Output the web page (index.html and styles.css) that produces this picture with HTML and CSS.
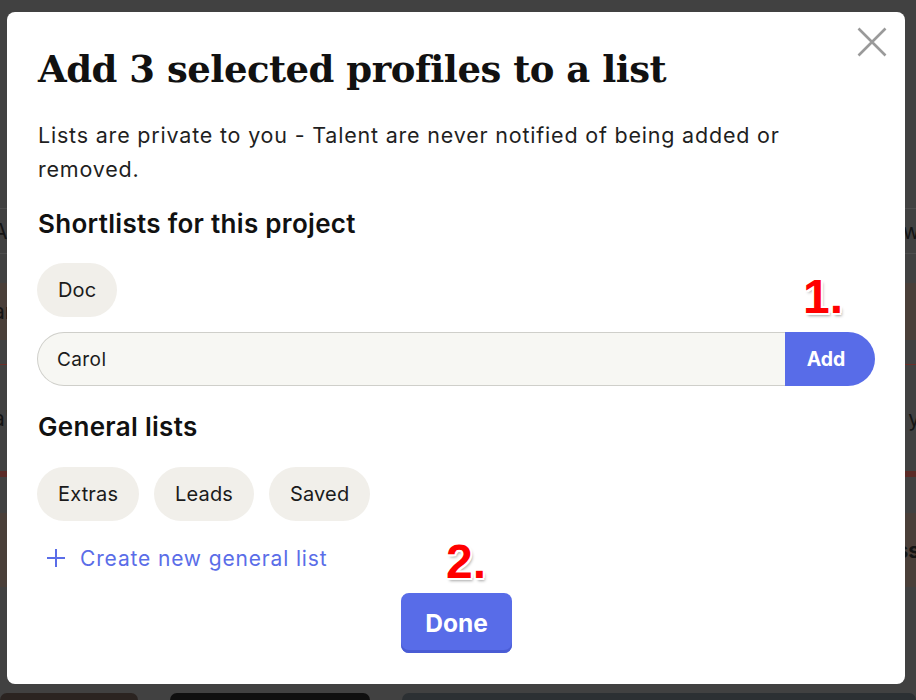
FILE: index.html
```html
<!DOCTYPE html>
<html lang="en">
<head>
<meta charset="utf-8">
<title>Add to list</title>
<link rel="stylesheet" href="styles.css">
</head>
<body>
<div class="page" aria-hidden="true">
  <div class="bg-space bg-top"></div>
  <div class="bg-line"></div>
  <div class="bg-row bg-row-a"><span class="bg-left">A</span><span class="bg-right">ow</span></div>
  <div class="bg-line"></div>
  <div class="bg-space bg-s1"></div>
  <div class="bg-row bg-brown bg-b1"><span class="bg-left">ar</span><span class="bg-right"></span></div>
  <div class="bg-space bg-s2"></div>
  <div class="bg-red-line"></div>
  <div class="bg-row bg-row-c"><span class="bg-left">a'</span><span class="bg-right">y</span></div>
  <div class="bg-red-band"></div>
  <div class="bg-space bg-s3"></div>
  <div class="bg-row bg-brown bg-b2"><span class="bg-left"></span><span class="bg-right bg-bold">ss</span></div>
  <div class="bg-space bg-s4"></div>
  <div class="bg-thumbs">
    <div class="thumb thumb-1"></div>
    <div class="thumb thumb-2"></div>
    <div class="thumb thumb-3"></div>
  </div>
</div>

<div class="overlay">
  <div class="modal" role="dialog" aria-labelledby="modal-title">
    <button class="close" aria-label="Close">
      <svg viewBox="0 0 30 30" width="30" height="30"><path d="M1.5 1.5 L28.5 28.5 M28.5 1.5 L1.5 28.5" stroke="#9a9a9a" stroke-width="2.6" fill="none"/></svg>
    </button>

    <h1 class="title" id="modal-title">Add 3 selected profiles to a list</h1>
    <p class="intro">Lists are private to you - Talent are never notified of being added or removed.</p>

    <h2 class="section-title">Shortlists for this project</h2>
    <div class="chips chips-project">
      <span class="chip">Doc</span>
    </div>
    <div class="add-row">
      <div class="add-input">Carol</div>
      <button class="add-btn">Add</button>
    </div>

    <h2 class="section-title section-general">General lists</h2>
    <div class="chips chips-general">
      <span class="chip">Extras</span>
      <span class="chip">Leads</span>
      <span class="chip">Saved</span>
    </div>

    <button class="create-link">
      <svg viewBox="0 0 20 20" width="20" height="20"><path d="M10 1 V19 M1 10 H19" stroke="#5a6de8" stroke-width="2" fill="none"/></svg>
      <span>Create new general list</span>
    </button>

    <div class="footer">
      <button class="done-btn">Done</button>
    </div>

    <span class="annot annot-1">1.</span>
    <span class="annot annot-2">2.</span>
  </div>
</div>
</body>
</html>
```

FILE: styles.css
```css
* { box-sizing: border-box; }

html, body {
  margin: 0;
  padding: 0;
}

body {
  width: 916px;
  height: 700px;
  overflow: hidden;
  background: #414141;
  font-family: Inter, "Noto Sans", sans-serif;
  color: #1b1b1b;
}

/* ---------- dimmed page behind the dialog ---------- */
.page {
  display: flex;
  flex-direction: column;
  height: 700px;
}
.bg-space { flex: none; }
.bg-top { height: 208px; }
.bg-s1 { height: 29px; }
.bg-s2 { height: 24px; }
.bg-s3 { height: 36px; }
.bg-s4 { height: 106px; }
.bg-line { height: 1px; background: #4e4e4e; }
.bg-red-line { height: 1px; background: #6b2e29; }
.bg-red-band { height: 6px; background: #5b2b27; }
.bg-row {
  display: flex;
  justify-content: space-between;
  align-items: center;
  font-size: 21px;
  color: #141414;
}
.bg-row-a { height: 44px; }
.bg-row-c { height: 106px; }
.bg-brown { background: #4a3f39; }
.bg-b1 { height: 57px; }
.bg-b2 { height: 74px; }
.bg-left { margin-left: -7px; }
.bg-right { margin-right: -4px; }
.bg-bold { font-weight: 700; }
.bg-thumbs {
  display: flex;
  gap: 32px;
  height: 7px;
}
.thumb { border-radius: 8px 8px 0 0; }
.thumb-1 { width: 138px; background: #2b2421; }
.thumb-2 { width: 200px; background: #0f0f0f; }
.thumb-3 { flex: 1; background: #2c3033; }

/* ---------- overlay + dialog ---------- */
.overlay {
  position: fixed;
  inset: 0;
  padding: 12px 11px 0 7px;
}

.modal {
  position: relative;
  background: #ffffff;
  border-radius: 8px;
  padding: 35px 30px 31px 31px;
}

.close {
  position: absolute;
  top: 15px;
  right: 18px;
  width: 30px;
  height: 30px;
  padding: 0;
  border: 0;
  background: none;
  display: block;
}
.close svg { display: block; }

.title {
  margin: 0;
  font-family: "DejaVu Serif", "Liberation Serif", serif;
  font-weight: 700;
  font-size: 37px;
  line-height: 44px;
  letter-spacing: -0.5px;
  color: #111;
}

.intro {
  margin: 27px 0 0;
  font-size: 21.5px;
  line-height: 34px;
  letter-spacing: 0.8px;
  color: #1f1f1f;
}

.section-title {
  margin: 23px 0 0;
  font-size: 26px;
  font-weight: 600;
  line-height: 30px;
  letter-spacing: 0.3px;
  color: #111;
}
.section-general { margin-top: 26px; }

.chips {
  display: flex;
  gap: 15px;
  margin-top: 24px;
  margin-left: -1px;
}
.chips-general { margin-top: 25px; }

.chip {
  height: 54px;
  line-height: 54px;
  padding: 0 21px;
  border-radius: 27px;
  background: #f1efea;
  font-size: 20px;
  letter-spacing: 0.15px;
  color: #1b1b1b;
}

.add-row {
  display: flex;
  margin-top: 15px;
  margin-left: -1px;
  height: 54px;
}
.add-input {
  flex: 1;
  background: #f7f7f3;
  border: 1px solid #cfcfca;
  border-right: 0;
  border-radius: 27px 0 0 27px;
  padding-left: 19px;
  display: flex;
  align-items: center;
  font-size: 19px;
  letter-spacing: 0.4px;
  color: #1b1b1b;
}
.add-btn {
  width: 90px;
  border: 0;
  border-radius: 0 27px 27px 0;
  background: #586ce8;
  color: #fff;
  font-family: Inter, sans-serif;
  font-weight: 700;
  font-size: 19.5px;
  padding: 0 8px 0 0;
}

.create-link {
  display: flex;
  align-items: center;
  gap: 14px;
  margin-top: 22px;
  height: 30px;
  padding: 0 0 0 8px;
  border: 0;
  background: none;
  font-family: Inter, sans-serif;
  font-size: 21px;
  letter-spacing: 0.85px;
  color: #5a6de8;
}
.create-link svg { display: block; }

.footer {
  display: flex;
  justify-content: center;
  margin-top: 20px;
}
.done-btn {
  height: 60px;
  width: 111px;
  border: 0;
  border-radius: 8px;
  background: #586ce8;
  box-shadow: inset 0 -3px 0 #4a5cd4;
  color: #fff;
  font-family: Inter, sans-serif;
  font-weight: 700;
  font-size: 24.5px;
  padding: 0 0 1px;
}

/* ---------- red step annotations ---------- */
.annot {
  position: absolute;
  font-family: "Liberation Sans", Arial, sans-serif;
  font-weight: 700;
  font-size: 48px;
  line-height: 48px;
  color: #ff0000;
  text-shadow:
    2px 0 0 #fff, -2px 0 0 #fff, 0 2px 0 #fff, 0 -2px 0 #fff,
    1.5px 1.5px 0 #fff, -1.5px -1.5px 0 #fff, 1.5px -1.5px 0 #fff, -1.5px 1.5px 0 #fff,
    2px 3px 3px rgba(0, 0, 0, 0.35);
}
.annot-1 { left: 796px; top: 261px; }
.annot-2 { left: 439px; top: 526px; }
```
